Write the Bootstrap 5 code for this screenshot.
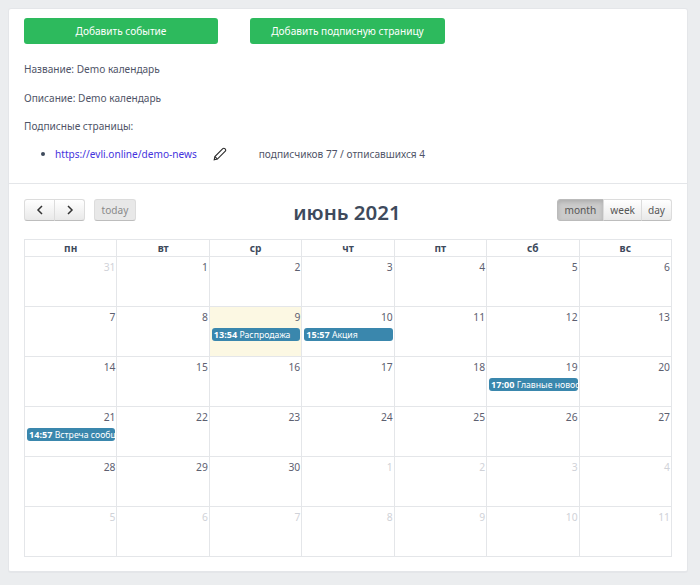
<!DOCTYPE html>
<html lang="ru"><head><meta charset="utf-8"><title>Календарь</title>
<link rel="stylesheet" href="https://cdn.jsdelivr.net/npm/bootstrap@5.3.0/dist/css/bootstrap.min.css">
<style>
html,body{height:585px;overflow:hidden}
body{background:#ebedef;font-family:"Noto Sans","Open Sans",sans-serif;font-size:10.1px;color:#4f5467;padding:8px 12px 0 8px}
.sheet{height:565px;background:#fff;border:1px solid #e4e6e9;border-radius:3px;border-width:1px 1px 2px 1px}
.top-part{height:175px;padding:9px 15px 0;border-bottom:1px solid #e4e6e9}
.add-btn{background:#2dba5d;color:#fff;font-size:10.1px;height:26px;line-height:26px;padding:0;border:0;border-radius:3px;width:194px;text-align:center}
.add-btn.wide-add{width:195px}
.btn-row{gap:32px}
.info-line{margin:0;height:28.5px;line-height:28.5px}
.first-line{margin-top:11px}
.sub-row{height:26px;line-height:26px;padding-left:31px;position:relative}
.sub-row::before{content:"";width:4px;height:4px;background:#3e4a5c;border-radius:50%;position:absolute;left:17px;top:11px}
.sub-row a{color:#4433dd;text-decoration:none}
.pencil{margin:0 32px 0 16px}
.cal-part{padding:15px 15px 0}
.cal-bar{height:24px;margin-bottom:16px;position:relative}
.cal-title{position:absolute;left:-1px;right:1px;top:-1px;text-align:center;font-size:20.5px;font-weight:600;line-height:28px;color:#3e4a5c;margin:0;pointer-events:none}
.fc-b{height:22px;background:linear-gradient(#fff,#e9e9e9);border:1px solid #dcdcdc;border-bottom-color:#bdbdbd;color:#555;font-size:10.1px;padding:0 6px;line-height:19px}
.fc-b.nav-b{width:31px;padding:0;display:flex;align-items:center;justify-content:center}
.fc-b.off{background:#e8e8e8;color:#888;margin-left:9px;width:42px;padding:0;border-radius:3px}
.fc-b.on{background:#cbcbcb;box-shadow:inset 0 2px 4px rgba(0,0,0,.15);border-color:#bbb;padding:0 7px}
.fc-b.first{border-radius:3px 0 0 3px}
.fc-b.last{border-radius:0 3px 3px 0;margin-left:-1px}
.fc-b.mid{margin-left:-1px}
.cal-table{table-layout:fixed;width:648px;border-collapse:collapse;margin:0}
.cal-table th,.cal-table td{border:1px solid #e4e6e9;padding:0}
.cal-table th{height:17px;text-align:center;font-size:10.1px;font-weight:700;line-height:15px;color:#3e4a5c}
.cal-table td{height:50px;vertical-align:top;text-align:right;font-size:10.3px;line-height:15px;color:#5d6070}
.day-n{display:block;padding:3px 1px 0 0;height:19px}
.other{color:#d0d2d8}
.now{background:#fcf8e3}
.ev{display:block;margin:2px 1px 0 2px;height:13px;line-height:13px;background:#3a87ad;border-radius:3px;color:#fff;font-size:8.7px;text-align:left;padding:0 2px;overflow:hidden;white-space:nowrap}
.ev b{font-weight:700;font-size:9.1px}
</style></head>
<body>
<div class="sheet">
 <div class="top-part">
  <div class="d-flex btn-row">
   <button class="btn add-btn" type="button">Добавить событие</button>
   <button class="btn add-btn wide-add" type="button">Добавить подписную страницу</button>
  </div>
  <p class="info-line first-line">Название: Demo календарь</p>
  <p class="info-line">Описание: Demo календарь</p>
  <p class="info-line">Подписные страницы:</p>
  <div class="sub-row d-flex align-items-center"><a href="#">https://evli.online/demo-news</a>
   <svg class="pencil" width="14" height="14" viewBox="0 0 14 14" fill="none" stroke="#2a2a2a" stroke-width="1.1"><path d="M1.2 12.8l.7-3.2L9.8 1.7a1.4 1.4 0 0 1 2 0l.5.5a1.4 1.4 0 0 1 0 2L4.4 12.1z"/><path d="M1.9 9.6l2.5 2.5"/></svg>
   <span>подписчиков 77 / отписавшихся 4</span></div>
 </div>
 <div class="cal-part">
  <div class="cal-bar d-flex justify-content-between">
   <div class="d-flex">
    <button class="fc-b nav-b first" type="button"><svg width="8" height="10" viewBox="0 0 8 10" fill="none" stroke="#333" stroke-width="1.5"><path d="M6 1L2 5l4 4"/></svg></button>
    <button class="fc-b nav-b last" type="button"><svg width="8" height="10" viewBox="0 0 8 10" fill="none" stroke="#333" stroke-width="1.5"><path d="M2 1l4 4-4 4"/></svg></button>
    <button class="fc-b off" type="button">today</button>
   </div>
   <h2 class="cal-title">июнь 2021</h2>
   <div class="d-flex">
    <button class="fc-b on first" type="button">month</button>
    <button class="fc-b mid" type="button">week</button>
    <button class="fc-b last" type="button">day</button>
   </div>
  </div>
  <table class="cal-table">
   <thead><tr><th>пн</th><th>вт</th><th>ср</th><th>чт</th><th>пт</th><th>сб</th><th>вс</th></tr></thead>
   <tbody>
    <tr><td><span class="day-n other">31</span></td><td><span class="day-n">1</span></td><td><span class="day-n">2</span></td><td><span class="day-n">3</span></td><td><span class="day-n">4</span></td><td><span class="day-n">5</span></td><td><span class="day-n">6</span></td></tr>
    <tr><td><span class="day-n">7</span></td><td><span class="day-n">8</span></td><td class="now"><span class="day-n">9</span><span class="ev"><b>13:54</b> Распродажа</span></td><td><span class="day-n">10</span><span class="ev"><b>15:57</b> Акция</span></td><td><span class="day-n">11</span></td><td><span class="day-n">12</span></td><td><span class="day-n">13</span></td></tr>
    <tr><td><span class="day-n">14</span></td><td><span class="day-n">15</span></td><td><span class="day-n">16</span></td><td><span class="day-n">17</span></td><td><span class="day-n">18</span></td><td><span class="day-n">19</span><span class="ev"><b>17:00</b> Главные новости</span></td><td><span class="day-n">20</span></td></tr>
    <tr><td><span class="day-n">21</span><span class="ev"><b>14:57</b> Встреча сообщества</span></td><td><span class="day-n">22</span></td><td><span class="day-n">23</span></td><td><span class="day-n">24</span></td><td><span class="day-n">25</span></td><td><span class="day-n">26</span></td><td><span class="day-n">27</span></td></tr>
    <tr><td><span class="day-n">28</span></td><td><span class="day-n">29</span></td><td><span class="day-n">30</span></td><td><span class="day-n other">1</span></td><td><span class="day-n other">2</span></td><td><span class="day-n other">3</span></td><td><span class="day-n other">4</span></td></tr>
    <tr><td><span class="day-n other">5</span></td><td><span class="day-n other">6</span></td><td><span class="day-n other">7</span></td><td><span class="day-n other">8</span></td><td><span class="day-n other">9</span></td><td><span class="day-n other">10</span></td><td><span class="day-n other">11</span></td></tr>
   </tbody>
  </table>
 </div>
</div>
<script src="https://cdn.jsdelivr.net/npm/bootstrap@5.3.0/dist/js/bootstrap.bundle.min.js"></script>
</body></html>
